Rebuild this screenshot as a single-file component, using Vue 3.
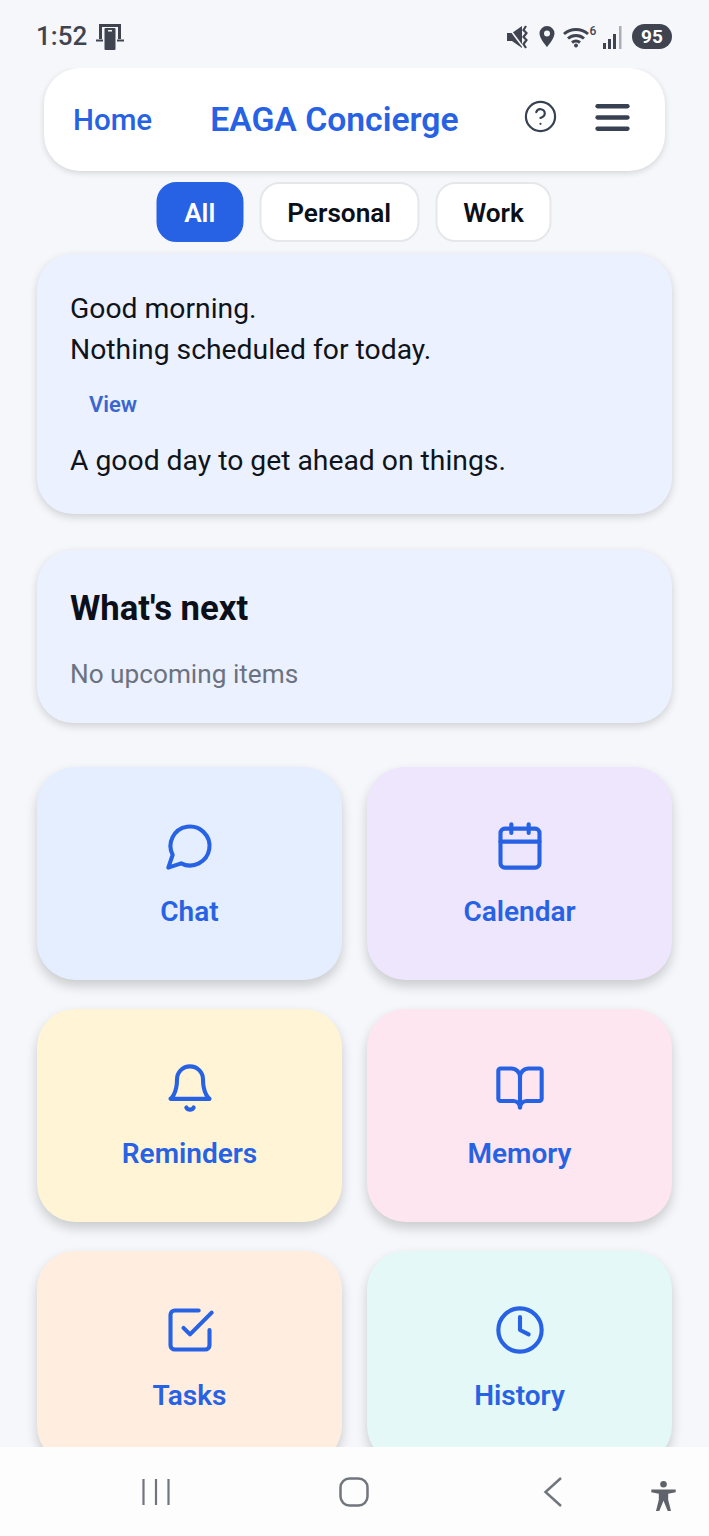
<script setup>
const tiles = [
  { label: 'Chat', tone: 'chat', paths: ['M7.9 20A9 9 0 1 0 4 16.1L2 22Z'] },
  { label: 'Calendar', tone: 'calendar', paths: ['M8 2v4', 'M16 2v4', 'M5 4h14a2 2 0 0 1 2 2v14a2 2 0 0 1-2 2H5a2 2 0 0 1-2-2V6a2 2 0 0 1 2-2z', 'M3 10h18'] },
  { label: 'Reminders', tone: 'reminders', paths: ['M6 8a6 6 0 0 1 12 0c0 7 3 9 3 9H3s3-2 3-9', 'M10.3 21a1.94 1.94 0 0 0 3.4 0'] },
  { label: 'Memory', tone: 'memory', paths: ['M12 7v14', 'M3 18a1 1 0 0 1-1-1V4a1 1 0 0 1 1-1h5a4 4 0 0 1 4 4 4 4 0 0 1 4-4h5a1 1 0 0 1 1 1v13a1 1 0 0 1-1 1h-6a3 3 0 0 0-3 3 3 3 0 0 0-3-3z'] },
  { label: 'Tasks', tone: 'tasks', paths: ['m9 11 3 3L22 4', 'M21 12v7a2 2 0 0 1-2 2H5a2 2 0 0 1-2-2V5a2 2 0 0 1 2-2h11'] },
  { label: 'History', tone: 'history', paths: ['M22 12a10 10 0 1 1-20 0 10 10 0 0 1 20 0z', 'M12 6v6l4 2'] }
]

const filters = ['All', 'Personal', 'Work']
</script>

<template>
  <div class="page">
    <!-- Android status bar -->
    <div class="status">
      <span class="time">1:52</span>
      <svg class="cast" width="28" height="26" viewBox="0 0 28 26" fill="#3f4450">
        <path d="M3 0h22v15h-3V3H6v12H3z" />
        <rect x="8.500" y="4" width="11" height="22" rx="1" />
        <rect x="0" y="15.500" width="7" height="2" />
        <rect x="21" y="15.500" width="7" height="2" />
        <rect x="12" y="6" width="4" height="1.500" fill="#f5f7fa" />
      </svg>
      <div class="status-right">
        <svg width="22" height="24" viewBox="0 0 22 24" fill="#3f4450">
          <path d="M0 8h5l10-7v22L5 16H0z" />
          <path d="M1 2l15 20" stroke="#f5f7fa" stroke-width="1.600" />
          <path d="M19 1l-2.500 4 3 3-3 4 3 3-3 4 2.500 4" fill="none" stroke="#3f4450" stroke-width="2.200" />
        </svg>
        <svg class="pin" width="16" height="24" viewBox="0 0 16 24">
          <path d="M8 1a7.500 7.500 0 0 0-7.500 7.500C.5 13.500 8 22 8 22s7.500-8.500 7.500-13.500A7.500 7.500 0 0 0 8 1z" fill="#3f4450" />
          <circle cx="8" cy="8.500" r="3" fill="#f5f7fa" />
        </svg>
        <svg class="wifi" width="36" height="24" viewBox="0 0 36 24" fill="none" stroke="#3f4450" stroke-width="3">
          <path d="M1 9a18 18 0 0 1 24 0" />
          <path d="M5 13.500a12 12 0 0 1 16 0" />
          <path d="M9 17.500a6.500 6.500 0 0 1 8 0" />
          <circle cx="13" cy="20.500" r="2" fill="#3f4450" stroke="none" />
          <text x="26.500" y="10" class="wifi-six">6</text>
        </svg>
        <svg class="signal" width="21" height="24" viewBox="0 0 21 24">
          <rect x="0" y="18" width="3" height="6" fill="#3f4450" />
          <rect x="5" y="14" width="3" height="10" fill="#3f4450" />
          <rect x="10" y="9" width="3" height="15" fill="#3f4450" />
          <rect x="16" y="1" width="2.500" height="23" fill="#a9adb5" />
        </svg>
        <span class="battery">95</span>
      </div>
    </div>

    <main class="content">
      <header class="topbar">
        <span class="home">Home</span>
        <span class="title">EAGA Concierge</span>
        <svg class="help" width="35" height="35" viewBox="0 0 24 24" fill="none" stroke="#374151" stroke-width="1.500" stroke-linecap="round" stroke-linejoin="round">
          <circle cx="12" cy="12" r="10" />
          <path d="M9.090 9a3 3 0 0 1 5.830 1c0 2-3 3-3 3" />
          <path d="M12 17h.01" />
        </svg>
        <svg class="menu" width="45" height="45" viewBox="0 0 24 24" fill="none" stroke="#374151" stroke-width="2.300" stroke-linecap="round">
          <path d="M4 6h16" />
          <path d="M4 12h16" />
          <path d="M4 18h16" />
        </svg>
      </header>

      <div class="filters">
        <button v-for="f in filters" :key="f" class="filter" :class="{ 'filter--on': f === 'All' }">{{ f }}</button>
      </div>

      <section class="card card--brief">
        <p class="line">Good morning.</p>
        <p class="line">Nothing scheduled for today.</p>
        <a class="view">View</a>
        <p class="line">A good day to get ahead on things.</p>
      </section>

      <section class="card card--next">
        <h2 class="next-title">What's next</h2>
        <p class="next-empty">No upcoming items</p>
      </section>

      <div class="grid">
        <div v-for="t in tiles" :key="t.label" class="tile" :class="'tile--' + t.tone">
          <svg width="52" height="52" viewBox="0 0 24 24" fill="none" stroke="#2862e4" stroke-width="1.900" stroke-linecap="round" stroke-linejoin="round">
            <path v-for="d in t.paths" :key="d" :d="d" />
          </svg>
          <span class="tile-label">{{ t.label }}</span>
        </div>
      </div>
    </main>

    <!-- Android nav bar -->
    <nav class="navbar">
      <svg class="nav-recents" width="30" height="28" viewBox="0 0 30 28" fill="none" stroke="#71757e" stroke-width="2.200">
        <path d="M2.500 1v26M15 1v26M27.500 1v26" />
      </svg>
      <svg class="nav-home" width="30" height="30" viewBox="0 0 30 30" fill="none" stroke="#71757e" stroke-width="2.500">
        <rect x="1.500" y="1.500" width="27" height="27" rx="9" />
      </svg>
      <svg class="nav-back" width="20" height="30" viewBox="0 0 20 30" fill="none" stroke="#71757e" stroke-width="2.500">
        <path d="M18 1L2.500 15 18 29" />
      </svg>
      <svg class="nav-access" width="25" height="30" viewBox="0 0 26 32" fill="#5f636b">
        <circle cx="13" cy="3.500" r="3.500" />
        <path d="M0 9h26v3l-8 1.500V20l3 12h-3.500L13 21l-4.500 11H5l3-12v-6.500L0 12z" />
      </svg>
    </nav>
  </div>
</template>

<style>
html, body {
  margin: 0;
  background: #f5f7fa;
}
</style>

<style scoped>
.page {
  width: 709px;
  height: 1536px;
  display: flex;
  flex-direction: column;
  overflow: hidden;
  background: #f5f7fa;
  font-family: Roboto, "Noto Sans", sans-serif;
}

/* status bar */
.status {
  flex: none;
  height: 68px;
  box-sizing: border-box;
  padding: 20px 37px 0 36px;
  display: flex;
  align-items: flex-start;
  color: #3f4450;
}
.time {
  font-size: 26px;
  line-height: 32px;
  font-weight: 500;
}
.cast {
  margin: 4px 0 0 9px;
}
.status-right {
  margin-left: auto;
  margin-top: 4px;
  display: flex;
  align-items: center;
}
.pin { margin-left: 10px; }
.wifi { margin-left: 8px; }
.wifi-six {
  font-size: 12px;
  font-weight: 500;
  fill: #3f4450;
  stroke: none;
  font-family: Roboto, sans-serif;
}
.signal { margin-left: 4px; }
.battery {
  margin-left: 8px;
  width: 40px;
  height: 25px;
  border-radius: 13px;
  background: #3f4450;
  color: #fff;
  font-size: 19px;
  font-weight: 700;
  line-height: 25px;
  text-align: center;
}

.content {
  flex: 1;
  min-height: 0;
  overflow: hidden;
  display: flex;
  flex-direction: column;
  padding: 0 37px;
}

/* top bar */
.topbar {
  flex: none;
  height: 103px;
  margin: 0 7px;
  box-sizing: border-box;
  padding: 0 30px 0 29px;
  display: flex;
  align-items: center;
  background: #fff;
  border-radius: 36px;
  box-shadow: 0 2px 6px rgba(0, 0, 0, 0.14);
}
.home {
  font-size: 29.500px;
  font-weight: 500;
  color: #2862e4;
}
.title {
  margin-left: 58px;
  font-size: 33.700px;
  font-weight: 600;
  color: #2862e4;
}
.help {
  margin: -6px 0 0 auto;
}
.menu {
  margin: -4px 0 0 32px;
}

/* filters */
.filters {
  flex: none;
  margin-top: 11px;
  display: flex;
  justify-content: center;
  gap: 16px;
  transform: translateX(-0.5px);
}
.filter {
  height: 60px;
  box-sizing: border-box;
  padding: 1px 26px 0;
  border: 2px solid #e5e7eb;
  border-radius: 20px;
  background: #fff;
  color: #0b0f19;
  font-family: inherit;
  font-size: 26.200px;
  font-weight: 600;
}
.filter--on {
  border-color: #2862e4;
  background: #2862e4;
  color: #fff;
}

/* cards */
.card {
  flex: none;
  box-sizing: border-box;
  background: #ebf1ff;
  border-radius: 36px;
  box-shadow: 0 3px 8px rgba(0, 0, 0, 0.16);
}
.card--brief {
  height: 260px;
  margin-top: 12px;
  padding: 34px 33px 0;
}
.line {
  margin: 0;
  font-size: 28.300px;
  line-height: 41px;
  color: #0f131a;
}
.view {
  display: block;
  margin: 22px 0 22px 19px;
  font-size: 22px;
  line-height: 26px;
  font-weight: 600;
  color: #3b66d0;
}
.card--next {
  height: 173px;
  margin-top: 36px;
  padding: 37px 33px 0;
}
.next-title {
  margin: 0;
  font-size: 34.700px;
  line-height: 42px;
  font-weight: 700;
  color: #0b0f19;
}
.next-empty {
  margin: 29px 0 0;
  font-size: 26.200px;
  line-height: 32px;
  color: #6b7280;
}

/* tile grid */
.grid {
  flex: none;
  margin-top: 44px;
  display: grid;
  grid-template-columns: 305px 305px;
  column-gap: 25px;
  row-gap: 29px;
}
.tile {
  height: 213px;
  box-sizing: border-box;
  padding-top: 53px;
  display: flex;
  flex-direction: column;
  align-items: center;
  border-radius: 38px;
  box-shadow: 0 6px 12px rgba(0, 0, 0, 0.18);
}
.tile-label {
  margin-top: 22px;
  font-size: 28px;
  line-height: 36px;
  font-weight: 600;
  color: #2862e4;
}
.tile--chat { background: #e4eeff; }
.tile--calendar { background: #ede6fd; }
.tile--reminders { background: #fff5d6; }
.tile--memory { background: #fde6ef; }
.tile--tasks { background: #ffeee0; }
.tile--history { background: #e3f8f7; }

/* nav bar */
.navbar {
  flex: none;
  height: 89px;
  position: relative;
  z-index: 1;
  box-sizing: border-box;
  padding: 0 0 0 141px;
  display: flex;
  align-items: center;
  background: #fdfdfd;
}
.nav-home { margin-left: 168px; }
.nav-back { margin-left: 174px; }
.nav-access { margin-left: 88px; margin-top: 8px; }
</style>
